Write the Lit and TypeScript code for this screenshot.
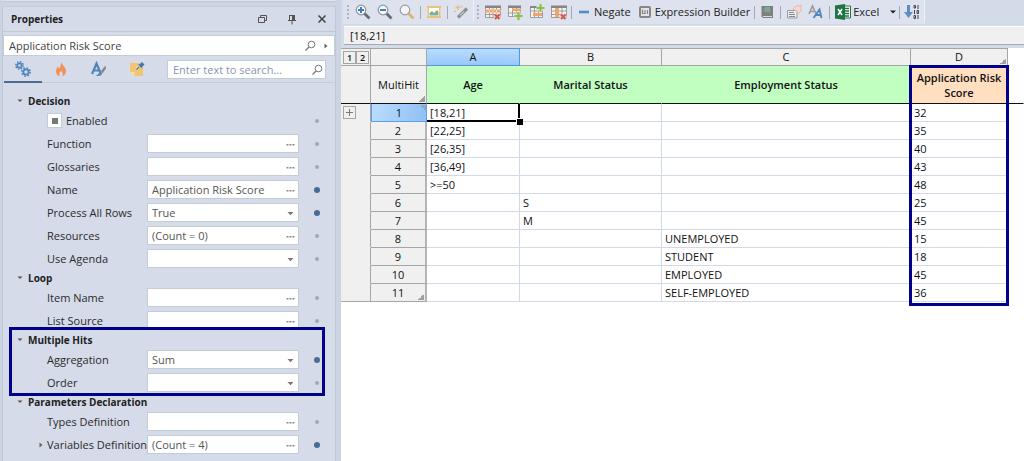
import { LitElement, html, css, svg, nothing } from "lit";
import { customElement, property } from "lit/decorators.js";

type Kind = "text" | "select" | "check";
interface Field { label: string; kind: Kind; value?: string; set?: boolean; expandable?: boolean }
interface Group { title: string; marked?: boolean; fields: Field[] }

const GROUPS: Group[] = [
  { title: "Decision", fields: [
    { label: "Enabled", kind: "check" },
    { label: "Function", kind: "text" },
    { label: "Glossaries", kind: "text" },
    { label: "Name", kind: "text", value: "Application Risk Score", set: true },
    { label: "Process All Rows", kind: "select", value: "True", set: true },
    { label: "Resources", kind: "text", value: "(Count = 0)" },
    { label: "Use Agenda", kind: "select" },
  ] },
  { title: "Loop", fields: [
    { label: "Item Name", kind: "text" },
    { label: "List Source", kind: "text" },
  ] },
  { title: "Multiple Hits", marked: true, fields: [
    { label: "Aggregation", kind: "select", value: "Sum", set: true },
    { label: "Order", kind: "select" },
  ] },
  { title: "Parameters Declaration", fields: [
    { label: "Types Definition", kind: "text" },
    { label: "Variables Definition", kind: "text", value: "(Count = 4)", set: true, expandable: true },
  ] },
];

const ROWS: [string, string, string, string][] = [
  ["[18,21]", "", "", "32"],
  ["[22,25]", "", "", "35"],
  ["[26,35]", "", "", "40"],
  ["[36,49]", "", "", "43"],
  [">=50", "", "", "48"],
  ["", "S", "", "25"],
  ["", "M", "", "45"],
  ["", "", "UNEMPLOYED", "15"],
  ["", "", "STUDENT", "18"],
  ["", "", "EMPLOYED", "45"],
  ["", "", "SELF-EMPLOYED", "36"],
];

const gear = (cx: number, cy: number, r: number) => svg`
  <circle cx=${cx} cy=${cy} r=${r} fill="none" stroke="#4f86bb" stroke-width="1.800"/>
  <circle cx=${cx} cy=${cy} r=${r + 1.5} fill="none" stroke="#4f86bb" stroke-width="1.600"
    stroke-dasharray=${`${((r + 1.5) * Math.PI) / 8} ${((r + 1.5) * Math.PI) / 8}`}/>`;

const grid = svg`
  <path d="M.5 2.500h15v11h-15zM.5 10.500h15M4.500 2v11M8 2v11M11.500 2v11" fill="#f4f4f4" stroke="#9c9c9c"/>
  <path d="M0 1.500h16v2.500H0z" fill="#858585"/>`;
const redX = svg`<path d="M10 10.500l4.500 4.500m0-4.500L10 15" stroke="#dbe1ee" stroke-width="4"/><path d="M10 10.500l4.500 4.500m0-4.500L10 15" stroke="#d9553f" stroke-width="2"/>`;

const ICONS: Record<string, unknown> = {
  zoomIn: svg`<path d="M9.500 9.500l5 5" stroke="#6c6c6c" stroke-width="2.800"/><circle cx="6" cy="6" r="4.800" fill="#f5f8fc" stroke="#8a95a2" stroke-width="1.200"/><path d="M3 6h6M6 3v6" stroke="#3f79b8" stroke-width="1.900"/>`,
  zoomOut: svg`<path d="M9.500 9.500l5 5" stroke="#6c6c6c" stroke-width="2.800"/><circle cx="6" cy="6" r="4.800" fill="#f5f8fc" stroke="#8a95a2" stroke-width="1.200"/><path d="M3 6h6" stroke="#3f79b8" stroke-width="1.900"/>`,
  zoom: svg`<path d="M9.500 9.500l5 5" stroke="#e2b565" stroke-width="2.800"/><circle cx="6" cy="6" r="4.800" fill="#f3f5f9" stroke="#989ea6" stroke-width="1.200"/>`,
  image: svg`<path d="M2 3h12v10H2z" fill="#fff" stroke="#edc27c" stroke-width="2"/><path d="M1.500 4.500v8M14.500 4.500v8" stroke="#faebd0" stroke-dasharray="1 1"/><path d="M3.500 11.500V9l2.500-2 2 2 3-3 1.500 2v3.500z" fill="#7fb096"/>`,
  wand: svg`<path d="M5 13.500L14 4.500" stroke="#8d8d8d" stroke-width="3.200"/><path d="M7 11.500L11 7.500" stroke="#c4c4c4" stroke-width="1.200"/><path d="M5 1v5M2.500 3.500h5M1 7.500h2M9 1.500v2" stroke="#eabf7a" stroke-width="1.300"/>`,
  delRow: svg`${grid}<path d="M0 5.500h16v3H0z" fill="#f0a36a"/><path d="M4.500 5.500v3M8 5.500v3M11.500 5.500v3" stroke="#fbdcc3"/>${redX}`,
  addRow: svg`<path d="M1.500 2.500h12v10h-12zM1.500 9h12M5.500 2v10M9.500 2v10" fill="#f4f4f4" stroke="#9c9c9c"/><path d="M1 1.500h13V4H1z" fill="#858585"/><path d="M5 4.500h9V7H5z" fill="#f0a36a"/><path d="M11.500 7.500v8.500M7 12h9" stroke="#dbe1ee" stroke-width="4"/><path d="M11.500 8v8M7.500 12h8" stroke="#8dbf45" stroke-width="2.200"/>`,
  addCol: svg`<path d="M1.500 3.500h12v10h-12zM1.500 7h12M5.500 3v10M9.500 3v10" fill="#f4f4f4" stroke="#9c9c9c"/><path d="M4 9h9v3H4z" fill="#f0a36a"/><path d="M1 2h7v2H1z" fill="#858585"/><path d="M11.500 0v8M7.500 4h8" stroke="#dbe1ee" stroke-width="4"/><path d="M11.500 0v8M7.500 4h8" stroke="#8dbf45" stroke-width="2"/>`,
  delCol: svg`<path d="M.5 2.500h15v11h-15zM.5 7h15M.5 10.500h15M11 2v11" fill="#f4f4f4" stroke="#9c9c9c"/><path d="M0 1.500h16v2.500H0z" fill="#858585"/><path d="M4 4h4v9H4z" fill="#f0a36a"/>${redX}`,
  minus: svg`<path d="M3 8h10" stroke="#4f8cc9" stroke-width="2.600"/>`,
  builder: svg`<rect x="3" y="3" width="10" height="10" rx="1" fill="#e4e4e4" stroke="#868686" stroke-width="2"/><path d="M5.500 5.500v4h2.500v-3.500M10.500 6v4" fill="none" stroke="#868686" stroke-width="1.200"/>`,
  book: svg`<path d="M2.500 2h11.500v12H4L2.500 12.500z" fill="#7f7f7f"/><path d="M4 12.500h9" stroke="#ddd"/><path d="M4.500 4h7v4h-7z" fill="#8d8d8d"/><path d="M6 3h5v6L8.500 7.500 6 9z" fill="#78a993"/>`,
  card: svg`<path d="M1.500 6.500h9.500v7.500H1.500z" fill="#eceef3" stroke="#9a9a9a"/><path d="M3 8.500h5M3 10.500h6M3 12.500h6" stroke="#8a8a8a"/><path d="M7 5l3-3h3l2-1v6l-3 3-1-3z" fill="#efd9d4" stroke="#eab7a7"/>`,
  font: svg`<path d="M1 10L4.500 2 8 10M2.500 7.500h4" fill="none" stroke="#9a9a9a" stroke-width="1.600"/><path d="M5.500 14L11.500 5.500 13.500 14M8 11h5" fill="none" stroke="#4f86bb" stroke-width="1.900"/>`,
  excel: svg`<path d="M9 2h6.500v12H9z" fill="#fff" stroke="#217346"/><path d="M10 4.500h4M10 7h4M10 9.500h4M10 12h4" stroke="#217346" stroke-width="1.300"/><path d="M0 1.500L10 0v16L0 14.500z" fill="#217346"/><path d="M3 5l4 6M7 5l-4 6" stroke="#fff" stroke-width="1.500"/>`,
  sort: svg`<path d="M4.500 1v9" stroke="#5b8fc4" stroke-width="3"/><path d="M0 8h9l-4.500 6z" fill="#5b8fc4"/><g fill="none" stroke="#444" stroke-width="1"><path d="M10 1.500h1.500v2.500H10zM14 1v4M10.500 6v4M13 6.500h1.500v3H13zM10 11.500h1.500v3H10zM14 11v4"/></g>`,
  gears: svg`${gear(4.5, 4.5, 2.2)}${gear(11, 11, 2.6)}`,
  flame: svg`<path d="M8 1c1 3 5 5 5 9 0 3-2 5-4 5 1.500-2 .5-4-1-5-1.500 1-2.500 3-1 5-2.500 0-4-2-4-4.500C3 8 4 7 4.500 5.500 5 6.500 5.500 7 6 7.500 7 6 8.500 4 8 1z" fill="#f0935a"/>`,
  style: svg`<path d="M1 13L5.500 2.500 10 13M2.500 9.500h6" fill="none" stroke="#4f86bb" stroke-width="2.200"/><path d="M9 11.500c-1 .5-1.500 2-4.500 3 2 1 6 .5 6.500-1.500z" fill="#4f86bb"/><path d="M10 10l4.500-5.500.5 3-3.500 5z" fill="#888"/>`,
  note: svg`<path d="M1 2h13v13H5.500L1 11z" fill="#f1c572"/><path d="M1 11h4.500v4z" fill="#f8dfa6"/><path d="M7.500 8L9.500 6" stroke="#f8e3b9" stroke-width="3"/><path d="M7.500 8.500l2.500-2.500" stroke="#4377ab" stroke-width="1.200"/><path d="M9 3.500l4 4 .5-2 2-2L13 1l-2 2z" fill="#4377ab"/>`,
  restore: svg`<path d="M4.500 6.500h6v5h-6zM6.500 6V4.500h6v5H11" fill="none" stroke="#555"/>`,
  pin: svg`<path d="M5.500 4v5M4 9.500h8M5 4.500h6M8 10v3.500" stroke="#555" fill="none"/><path d="M8 4h3v5H8z" fill="#555"/>`,
  close: svg`<path d="M4.500 4.500l7 7m0-7l-7 7" stroke="#444" stroke-width="1.500"/>`,
  search: svg`<circle cx="9.500" cy="6.500" r="3.300" fill="none" stroke="#777"/><path d="M7 9l-3.500 3.500" stroke="#777" stroke-width="1.300"/>`,
  more: svg`<path d="M4.500 8h2v1.500h-2zM7.500 8h2v1.500h-2zM10.500 8h2v1.500h-2z" fill="#888"/>`,
  down: svg`<path d="M5.500 7h6l-3 3.200z" fill="#777"/>`,
  caret: svg`<path d="M5.500 6.500h5L8 9z" fill="#555"/>`,
  right: svg`<path d="M6.500 5.500L9.500 8l-3 2.500z" fill="#666"/>`,
  menu: svg`<path d="M5 6.500h6L8 9.500z" fill="#222"/>`,
};
const icon = (name: string) => html`<svg class="icon" viewBox="0 0 16 16" aria-hidden="true">${ICONS[name]}</svg>`;

const shared = css`
  * { box-sizing: border-box; }
  button, input, select { font: inherit; color: inherit; margin: 0; padding: 0; border: 0; background: none; border-radius: 0; outline: 0; }
  .icon { display: block; width: 16px; height: 16px; flex: none; }
`;

@customElement("property-row")
class PropertyRow extends LitElement {
  @property({ attribute: false }) field!: Field;
  static styles = [shared, css`
    :host { display: grid; grid-template-columns: 14px 100px minmax(0, 1fr) 36px; align-items: center; height: 23px; }
    label { white-space: nowrap; color: #2b2b2b; }
    .box { display: flex; align-items: center; height: 19px; background: #fff; border: 1px solid #c3cdd6; }
    .value { flex: 1; min-width: 0; width: 100%; height: 17px; padding-left: 4px; color: #555; appearance: none; }
    .arrow { pointer-events: none; }
    .dot { justify-self: center; width: 4px; height: 4px; border-radius: 50%; background: #a3a7b2; }
    .dot.set { width: 6px; height: 6px; background: #4a6c93; }
    .check { grid-column: 2 / 4; display: flex; align-items: center; gap: 4px; }
    .check input { appearance: none; width: 15px; height: 15px; background: #fff; border: 1px solid #c3cdd6; display: grid; place-items: center; }
    .check input::before { content: ""; width: 6px; height: 6px; background: #777; }
  `];
  render() {
    const f = this.field;
    const dot = html`<span class="dot ${f.set ? "set" : ""}"></span>`;
    if (f.kind === "check") {
      return html`<span></span><label class="check"><input type="checkbox" .indeterminate=${true}>${f.label}</label>${dot}`;
    }
    return html`
      <span>${f.expandable ? icon("right") : nothing}</span>
      <label for="v">${f.label}</label>
      <div class="box">
        ${f.kind === "select"
          ? html`<select id="v" class="value"><option>${f.value ?? ""}</option></select><span class="arrow">${icon("down")}</span>`
          : html`<input id="v" class="value" type="text" .value=${f.value ?? ""}><button aria-label="Edit ${f.label}">${icon("more")}</button>`}
      </div>${dot}`;
  }
}

@customElement("properties-panel")
class PropertiesPanel extends LitElement {
  static styles = [shared, css`
    :host { display: flex; flex-direction: column; background: #d5dbe9; border: solid #bfc9d3; border-width: 0 1px; }
    header { display: flex; align-items: center; gap: 14px; height: 24px; padding: 0 5px 0 8px; }
    h2, h3 { font-size: 10px; font-weight: 700; color: #222; }
    h2 { flex: 1; margin: 0; }
    .top { border-top: 1px solid #c0cad4; }
    .object { display: flex; align-items: center; height: 21px; margin-top: 3px; background: #fff; border: 1px solid #c3cdd6; padding-left: 5px; }
    .object input { flex: 1; min-width: 0; color: #444; }
    .tabs { display: flex; height: 27px; margin: 0 1px; border-bottom: 1px solid #c3cdd6; }
    .tab { display: grid; flex: none; place-items: center; width: 38px; height: 27px; border-bottom: 2px solid transparent; }
    .tab.on { border-bottom-color: #4a6c93; }
    .find { display: flex; flex: 1; min-width: 0; align-items: center; height: 19px; margin: 4px 8px 0 11px; padding-left: 5px; background: #fff; border: 1px solid #c3cdd6; }
    .find input { flex: 1; min-width: 0; }
    .find input::placeholder { color: #8796ac; opacity: 1; }
    .list { padding: 10px 0 4px 30px; }
    .group { position: relative; }
    h3 { display: flex; align-items: center; height: 16px; margin: 0 0 0 -21px; }
    .marked::after { content: ""; position: absolute; inset: -5px 10px -2px -24px; border: 3px solid #00008c; pointer-events: none; z-index: 1; }
  `];
  render() {
    return html`
      <header><h2>Properties</h2>
        <button aria-label="Restore">${icon("restore")}</button>
        <button aria-label="Pin">${icon("pin")}</button>
        <button aria-label="Close">${icon("close")}</button>
      </header>
      <div class="top"><div class="object"><input type="text" aria-label="Object" value="Application Risk Score">
        <button aria-label="Find object">${icon("search")}</button><button aria-label="Next">${icon("right")}</button></div></div>
      <div class="tabs">
        ${["gears", "flame", "style", "note"].map((n, i) => html`<button class="tab ${i ? "" : "on"}" aria-label=${n}>${icon(n)}</button>`)}
        <div class="find"><input type="text" aria-label="Search properties" placeholder="Enter text to search..."><button aria-label="Search">${icon("search")}</button></div>
      </div>
      <div class="list">
        ${GROUPS.map((g) => html`<section class="group ${g.marked ? "marked" : ""}">
          <h3>${icon("caret")}${g.title}</h3>
          ${g.fields.map((f) => html`<property-row .field=${f}></property-row>`)}
        </section>`)}
      </div>`;
  }
}

@customElement("tool-bar")
class ToolBar extends LitElement {
  static styles = [shared, css`
    :host { display: flex; height: 24px; padding-left: 2px; color: #222; }
    .set { display: flex; align-items: center; gap: 6px; padding: 0 4px; background: #dde2ee; border-right: 1px solid #eef1f7; border-radius: 0 0 3px 0; }
    .set:last-child { padding-left: 3px; }
    .grip { width: 2px; height: 14px; background: repeating-linear-gradient(#aab1c0 0 2px, transparent 2px 4px); }
    .sep { width: 1px; height: 13px; margin: 0 -1px; background: #a3a8b2; }
    .sep.tight { margin: 0 -2px; }
    button { display: flex; align-items: center; gap: 2px; white-space: nowrap; }
    .menu { margin-right: -6px; }
  `];
  private tool(name: string, text = "") {
    return html`<button aria-label=${text || name}>${icon(name)}${text}</button>`;
  }
  render() {
    const sep = html`<span class="sep"></span>`;
    const tight = html`<span class="sep tight"></span>`;
    const t = (n: string, s?: string) => this.tool(n, s);
    return html`
      <div class="set"><span class="grip"></span>${t("zoomIn")}${t("zoomOut")}${t("zoom")}${sep}${t("image")}${sep}${t("wand")}</div>
      <div class="set"><span class="grip"></span>${t("delRow")}${t("addRow")}${t("addCol")}${t("delCol")}${tight}
        ${t("minus", "Negate")}${t("builder", "Expression Builder")}${tight}${t("book")}${sep}${t("card")}${t("font")}${sep}
        ${t("excel", "Excel")}<button class="menu" aria-label="Excel options">${icon("menu")}</button>${tight}${t("sort")}</div>`;
  }
}

@customElement("decision-sheet")
class DecisionSheet extends LitElement {
  static styles = [shared, css`
    :host { display: block; position: relative; background: #fff; color: #111; }
    table { width: 100%; table-layout: fixed; border-collapse: separate; border-spacing: 0; }
    th, td { padding: 0; height: 18px; font-weight: 400; overflow: hidden; white-space: nowrap; border: solid #d2d9e8; border-width: 0 1px 1px 0; }
    .c-outline { width: 30px; } .c-num { width: 56px; } .c-a { width: 93px; } .c-b { width: 142px; } .c-c { width: 249px; } .c-d { width: 97px; }
    td { text-align: left; padding-left: 3px; }
    thead th { background: #f0f0f0; border-color: #a5a5a5; border-top: 1px solid #a5a5a5; }
    .names th { height: 38px; border-top: 0; border-bottom-color: #111; }
    .names .title { background: #c0ffc0; border-right-color: #c0ffc0; font-weight: 600; white-space: normal; }
    .names .title.out { background: #ffdfc0; border-right-color: #a5a5a5; line-height: 15px; }
    .outline { background: #f0f0f0; border-color: #a5a5a5; border-bottom-color: #f0f0f0; padding: 0 0 0 2px; }
    tbody tr:last-child .outline { border-bottom-color: #a5a5a5; }
    .num { background: #f0f0f0; border-color: #a5a5a5; text-align: center; border-right: 2px solid #b5b5b5; }
    .corner { background: linear-gradient(135deg, transparent 50%, #a0a0a0 50%) right 1px bottom 1px / 6px 6px no-repeat #f0f0f0; }
    .num.on { background: linear-gradient(225deg, #91a9c4 50%, transparent 50%) right 0 top 1px / 6px 6px no-repeat, linear-gradient(100deg, #bbdcff, #8fc0f5); border: solid #5b9ff0; border-width: 0 1px 1px 1px; }
    thead .colhead.on { background: linear-gradient(#bbdcff, #98c8fa); border-color: #4f94ea; }
    .rest, thead .rest { background: #fff; border-color: #fff; }
    .names .rest { border-bottom-color: #111; }
    .levels { display: flex; padding-left: 2px; }
    .levels button { width: 13px; height: 13px; border: 1px solid #a5a5a5; font-size: 9px; line-height: 11px; font-weight: 600; display: grid; place-items: center; }
    .plus { display: grid; place-items: center; width: 13px; height: 13px; border: 1px solid #a5a5a5; }
    .plus svg { display: block; width: 9px; height: 9px; }
    .cursor { position: relative; overflow: visible; }
    .cursor::before { content: ""; position: absolute; inset: 0 -1px -1px 0; border: solid #000; border-width: 0 2px 2px 0; }
    .cursor::after { content: ""; position: absolute; right: -4px; bottom: -4px; width: 6px; height: 6px; background: #000; border: solid #fff; border-width: 1px 0 0 1px; z-index: 1; }
    .mark { position: absolute; left: 568px; top: 17px; width: 100px; height: 241px; border: 3px solid #00008c; pointer-events: none; }
  `];
  render() {
    return html`<table>
      <colgroup><col class="c-outline"><col class="c-num"><col class="c-a"><col class="c-b"><col class="c-c"><col class="c-d"><col></colgroup>
      <thead>
        <tr><th><div class="levels"><button>1</button><button>2</button></div></th><th></th>
          <th class="colhead on">A</th><th>B</th><th>C</th><th class="corner">D</th><th class="rest"></th></tr>
        <tr class="names"><th></th><th class="corner">MultiHit</th><th class="title">Age</th><th class="title">Marital Status</th>
          <th class="title">Employment Status</th><th class="title out">Application Risk Score</th><th class="rest"></th></tr>
      </thead>
      <tbody>${ROWS.map((r, i) => html`<tr>
        <td class="outline">${i === 0 ? html`<button class="plus" aria-label="Expand"><svg viewBox="0 0 9 9"><path d="M1 4.500h7M4.500 1v7" stroke="#777"/></svg></button>` : nothing}</td>
        <th class="num ${i === 0 ? "on" : ""} ${i === ROWS.length - 1 ? "corner" : ""}">${i + 1}</th>
        ${r.map((v, c) => html`<td class=${i === 0 && c === 0 ? "cursor" : ""}>${v}</td>`)}<td class="rest"></td>
      </tr>`)}</tbody>
    </table><div class="mark"></div>`;
  }
}

@customElement("app-root")
class AppRoot extends LitElement {
  static styles = [shared, css`
    :host { display: flex; min-height: 100vh; background: #ccd4e3; font: 11px/16px "Open Sans", "Noto Sans", sans-serif; overflow: hidden; }
    .side { display: flex; flex-direction: column; flex: none; width: 334px; margin: 0 5px 0 2px; }
    .edge { height: 2px; margin-bottom: 4px; border-bottom: 1px solid #bfc9d3; background: #dfe4ee; }
    properties-panel { flex: 1; border-top: 1px solid #c5cedb; }
    main { flex: 1; min-width: 0; display: flex; flex-direction: column; background: #d3dae8; }
    .formula { height: 19px; margin: 2px 0 3px 3px; padding-left: 6px; background: #f0f0f0; border-top: 1px solid #fff; border-bottom: 1px solid #a5a9b2; color: #111; }
    decision-sheet { flex: 1; }
  `];
  render() {
    return html`
      <div class="side"><div class="edge"></div><properties-panel></properties-panel></div>
      <main><tool-bar></tool-bar><input class="formula" type="text" aria-label="Cell content" value="[18,21]"><decision-sheet></decision-sheet></main>`;
  }
}
